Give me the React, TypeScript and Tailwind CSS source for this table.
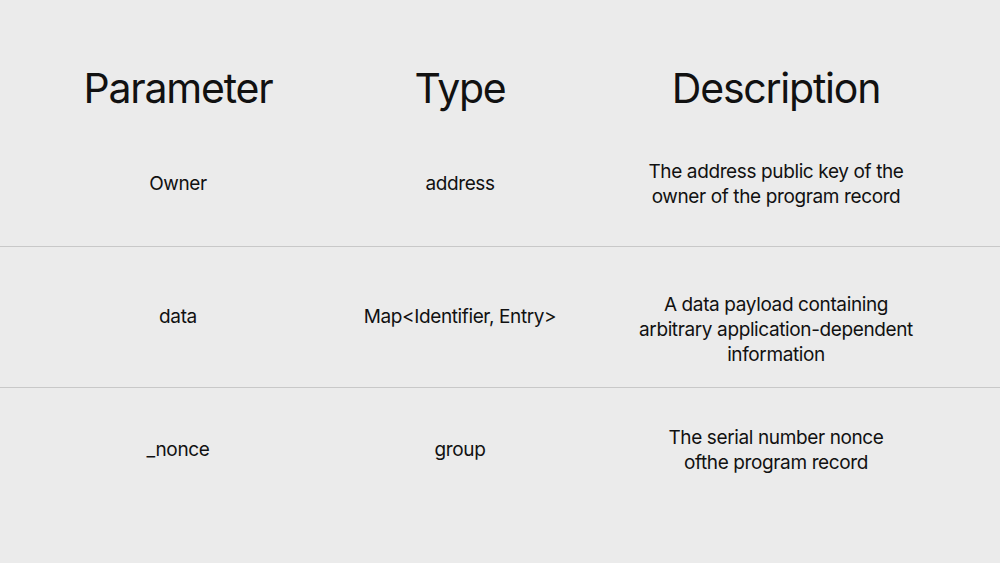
import React from "react";

const rows = [
  {
    name: "Owner",
    type: "address",
    desc: ["The address public key of the", "owner of the program record"],
    className: "h-[134px] pt-[46px] border-b border-[#c8c8c8]",
  },
  {
    name: "data",
    type: "Map<Identifier, Entry>",
    desc: ["A data payload containing", "arbitrary application-dependent", "information"],
    className: "h-[141px] pt-[45px] border-b border-[#c8c8c8]",
  },
  {
    name: "_nonce",
    type: "group",
    desc: ["The serial number nonce", "ofthe program record"],
    className: "pt-[37px]",
  },
];

export default function App() {
  return (
    <div
      className="w-[1000px] h-[563px] bg-[#ebebeb] text-[#111111] overflow-hidden"
      style={{ fontFamily: "Inter, 'Liberation Sans', sans-serif" }}
    >
      {/* Header */}
      <div className="h-[113px] pt-[63px] pl-[40px] grid grid-cols-[276px_288px_344px] text-[41px] leading-[50px] tracking-[-0.03em] text-center">
        <div>Parameter</div>
        <div>Type</div>
        <div>Description</div>
      </div>

      {/* Rows */}
      {rows.map((row) => (
        <div key={row.name} className={row.className}>
          <div className="pl-[40px] grid grid-cols-[276px_288px_344px] items-start text-[19px] leading-[25px] tracking-[-0.02em] text-center">
            <div className="pt-[12px]">{row.name}</div>
            <div className="pt-[12px]">{row.type}</div>
            <div>
              {row.desc.map((line) => (
                <div key={line}>{line}</div>
              ))}
            </div>
          </div>
        </div>
      ))}
    </div>
  );
}
